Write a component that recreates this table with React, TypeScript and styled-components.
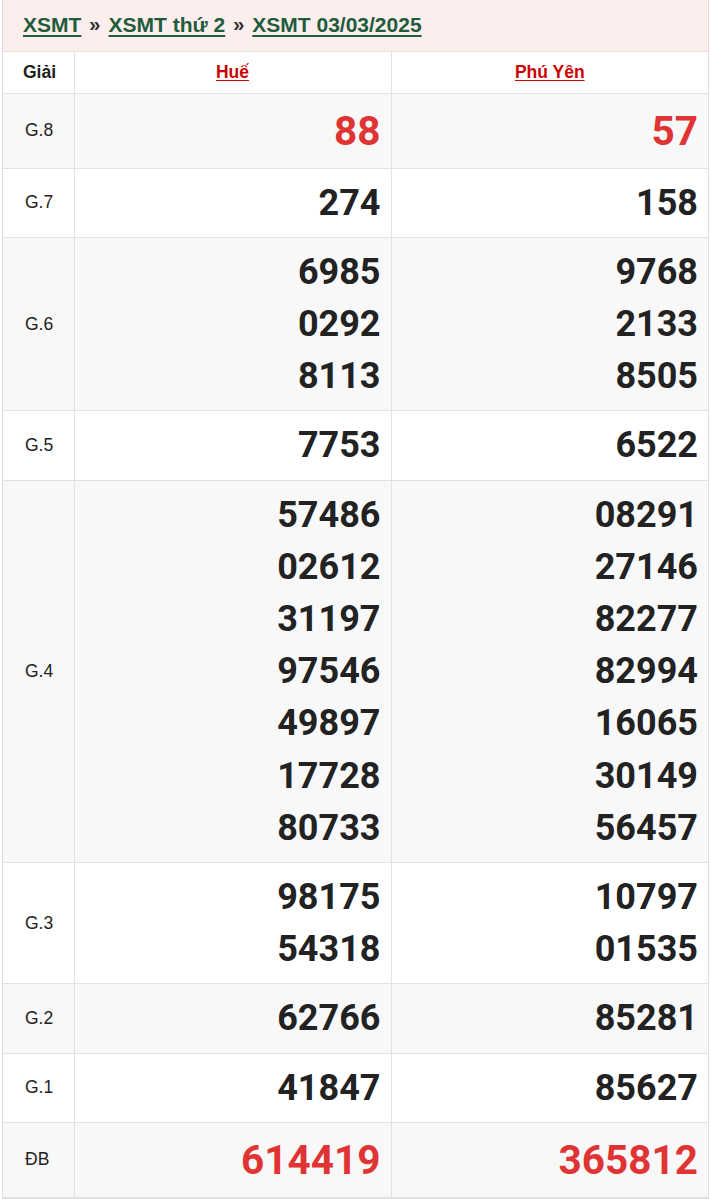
import React from "react";
import styled, { createGlobalStyle } from "styled-components";

const Global = createGlobalStyle`
  html, body { margin: 0; padding: 0; background: #fff; }
  body { font-family: "Liberation Sans", Arial, sans-serif; }
`;

const Wrap = styled.div`
  margin: 0 2px;
  width: 707px;
  box-sizing: border-box;
  border-left: 1px solid #ddd;
  border-right: 1px solid #ddd;
  border-bottom: 1px solid #ddd;
`;

const Crumbs = styled.div`
  height: 52px;
  box-sizing: border-box;
  background: #fdeeee;
  border-bottom: 1px solid #e2e2e2;
  display: flex;
  align-items: center;
  padding: 0 0 2px 20px;
  gap: 8px;
  font-size: 21px;
  font-weight: 700;
`;

const Crumb = styled.a`
  color: #1f5c3b;
  text-decoration: underline;
  text-underline-offset: 3px;
  text-decoration-thickness: 2px;
`;

const Sep = styled.span`
  color: #333;
  font-size: 20px;
`;

const Table = styled.table`
  width: 100%;
  border-collapse: collapse;
  table-layout: fixed;
`;

const HeadCell = styled.th<{ $first?: boolean }>`
  height: 41px;
  box-sizing: border-box;
  padding: 0;
  font-size: 17.5px;
  font-weight: 700;
  color: #222;
  text-align: ${(p) => (p.$first ? "left" : "center")};
  padding-left: ${(p) => (p.$first ? "20px" : "0")};
  border-bottom: 1px solid #e2e2e2;
  border-left: ${(p) => (p.$first ? "none" : "1px solid #e2e2e2")};
`;

const HeadLink = styled.a`
  color: #cc0000;
  text-decoration: underline;
  text-underline-offset: 2px;
`;

const Row = styled.tr<{ $alt: boolean }>`
  background: ${(p) => (p.$alt ? "#f8f8f8" : "#fff")};
`;

const Label = styled.td`
  font-size: 17.5px;
  color: #222;
  padding: 0 0 0 22px;
  border-bottom: 1px solid #e2e2e2;
  vertical-align: middle;
`;

const Nums = styled.td<{ $red: boolean }>`
  border-bottom: 1px solid #e2e2e2;
  border-left: 1px solid #e2e2e2;
  padding: 8px 10px 8px 0;
  text-align: right;
  font-family: Roboto, "Liberation Sans", sans-serif;
  font-weight: 700;
  font-size: ${(p) => (p.$red ? "40.5px" : "36px")};
  line-height: ${(p) => (p.$red ? "58px" : "52.2px")};
  color: ${(p) => (p.$red ? "#e03434" : "#222")};
`;

const Num = styled.div``;

type Prize = { label: string; a: string[]; b: string[]; red?: boolean };

const prizes: Prize[] = [
  { label: "G.8", a: ["88"], b: ["57"], red: true },
  { label: "G.7", a: ["274"], b: ["158"] },
  { label: "G.6", a: ["6985", "0292", "8113"], b: ["9768", "2133", "8505"] },
  { label: "G.5", a: ["7753"], b: ["6522"] },
  {
    label: "G.4",
    a: ["57486", "02612", "31197", "97546", "49897", "17728", "80733"],
    b: ["08291", "27146", "82277", "82994", "16065", "30149", "56457"],
  },
  { label: "G.3", a: ["98175", "54318"], b: ["10797", "01535"] },
  { label: "G.2", a: ["62766"], b: ["85281"] },
  { label: "G.1", a: ["41847"], b: ["85627"] },
  { label: "ĐB", a: ["614419"], b: ["365812"], red: true },
];

export default function App() {
  return (
    <>
      <Global />
      <Wrap>
        <Crumbs>
          <Crumb href="#">XSMT</Crumb>
          <Sep>»</Sep>
          <Crumb href="#">XSMT thứ 2</Crumb>
          <Sep>»</Sep>
          <Crumb href="#">XSMT 03/03/2025</Crumb>
        </Crumbs>
        <Table>
          <colgroup>
            <col style={{ width: "71px" }} />
            <col />
            <col />
          </colgroup>
          <thead>
            <tr>
              <HeadCell $first>Giải</HeadCell>
              <HeadCell>
                <HeadLink href="#">Huế</HeadLink>
              </HeadCell>
              <HeadCell>
                <HeadLink href="#">Phú Yên</HeadLink>
              </HeadCell>
            </tr>
          </thead>
          <tbody>
            {prizes.map((p, i) => (
              <Row key={p.label} $alt={i % 2 === 0}>
                <Label>{p.label}</Label>
                <Nums $red={!!p.red}>
                  {p.a.map((n) => (
                    <Num key={n}>{n}</Num>
                  ))}
                </Nums>
                <Nums $red={!!p.red}>
                  {p.b.map((n) => (
                    <Num key={n}>{n}</Num>
                  ))}
                </Nums>
              </Row>
            ))}
          </tbody>
        </Table>
      </Wrap>
    </>
  );
}
